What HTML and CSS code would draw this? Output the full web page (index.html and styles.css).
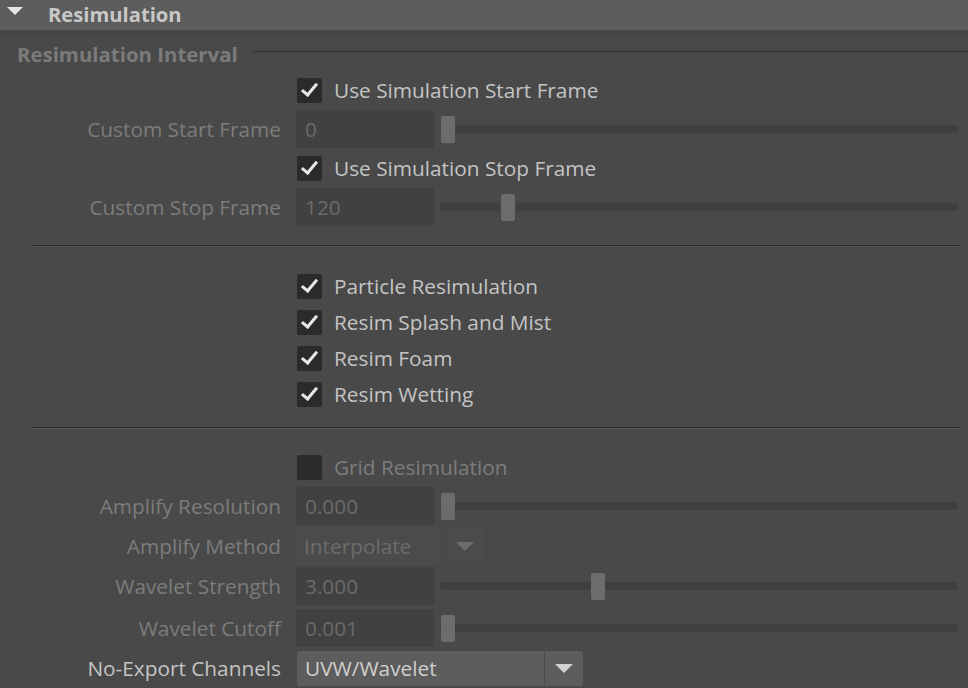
FILE: index.html
```html
<!DOCTYPE html>
<html lang="en">
<head>
    <meta charset="UTF-8">
    <title>Resimulation</title>
    <link rel="stylesheet" href="styles.css">
</head>
<body>
<div class="frame">
    <div class="frame-head">
        <span class="arrow"></span>
        <span class="frame-title">Resimulation</span>
    </div>
    <div class="frame-body">
        <div class="group-title">
            <span>Resimulation Interval</span>
            <span class="group-line"></span>
        </div>

        <div class="row row-check">
            <div class="label"></div>
            <div class="ctrl"><span class="cb on"></span><span class="cb-text">Use Simulation Start Frame</span></div>
        </div>
        <div class="row">
            <div class="label dim">Custom Start Frame</div>
            <div class="ctrl">
                <div class="field">0</div>
                <div class="slider"><div class="track"></div><div class="handle" style="left:1px"></div></div>
            </div>
        </div>
        <div class="row row-check">
            <div class="label"></div>
            <div class="ctrl"><span class="cb on"></span><span class="cb-text">Use Simulation Stop Frame</span></div>
        </div>
        <div class="row">
            <div class="label dim">Custom Stop Frame</div>
            <div class="ctrl">
                <div class="field">120</div>
                <div class="slider"><div class="track"></div><div class="handle" style="left:61px"></div></div>
            </div>
        </div>

        <div class="sep sep-1"></div>

        <div class="checks">
            <div class="row row-small">
                <div class="label"></div>
                <div class="ctrl"><span class="cb on"></span><span class="cb-text">Particle Resimulation</span></div>
            </div>
            <div class="row row-small">
                <div class="label"></div>
                <div class="ctrl"><span class="cb on"></span><span class="cb-text">Resim Splash and Mist</span></div>
            </div>
            <div class="row row-small">
                <div class="label"></div>
                <div class="ctrl"><span class="cb on"></span><span class="cb-text">Resim Foam</span></div>
            </div>
            <div class="row row-small">
                <div class="label"></div>
                <div class="ctrl"><span class="cb on"></span><span class="cb-text">Resim Wetting</span></div>
            </div>
        </div>

        <div class="sep sep-2"></div>

        <div class="row row-check">
            <div class="label"></div>
            <div class="ctrl"><span class="cb"></span><span class="cb-text dim">Grid Resimulation</span></div>
        </div>
        <div class="row">
            <div class="label dim">Amplify Resolution</div>
            <div class="ctrl">
                <div class="field">0.000</div>
                <div class="slider"><div class="track"></div><div class="handle" style="left:1px"></div></div>
            </div>
        </div>
        <div class="row">
            <div class="label dim">Amplify Method</div>
            <div class="ctrl">
                <div class="combo combo-off">
                    <span class="combo-text">Interpolate</span>
                    <span class="combo-btn"><span class="tri"></span></span>
                </div>
            </div>
        </div>
        <div class="row row-gap">
            <div class="label dim">Wavelet Strength</div>
            <div class="ctrl">
                <div class="field">3.000</div>
                <div class="slider"><div class="track"></div><div class="handle" style="left:151px"></div></div>
            </div>
        </div>
        <div class="row">
            <div class="label dim">Wavelet Cutoff</div>
            <div class="ctrl">
                <div class="field">0.001</div>
                <div class="slider"><div class="track"></div><div class="handle" style="left:1px"></div></div>
            </div>
        </div>
        <div class="row">
            <div class="label">No-Export Channels</div>
            <div class="ctrl">
                <div class="combo">
                    <span class="combo-text">UVW/Wavelet</span>
                    <span class="combo-btn"><span class="tri"></span></span>
                </div>
            </div>
        </div>
    </div>
</div>
</body>
</html>
```

FILE: styles.css
```css
html,body{
    margin:0;
    padding:0;
}
body{
    background:#494949;
    font-family:"Open Sans","Noto Sans",sans-serif;
    font-size:20.8px;
    color:#c4c4c4;
    width:968px;
    height:688px;
    overflow:hidden;
}
.frame-head{
    height:30px;
    background:#5d5d5d;
    display:flex;
    align-items:center;
}
.arrow{
    width:0;
    height:0;
    border-left:8px solid transparent;
    border-right:8px solid transparent;
    border-top:8px solid #e6e6e6;
    margin:0 25px 0 7px;
    position:relative;
    top:-4px;
}
.frame-title{
    font-weight:bold;
    color:#c8c8c8;
    font-size:20.2px;
    position:relative;
    top:-1px;
}
.frame-body{
    border-top:5px solid #454545;
}
.group-title{
    height:28px;
    margin-top:5px;
    margin-bottom:3px;
    display:flex;
    align-items:center;
    padding-left:17px;
    font-weight:bold;
    font-size:20.4px;
    color:#7b7b7b;
}
.group-line{
    flex:1;
    height:1px;
    background:#2e2e2e;
    margin-left:15px;
    position:relative;
    top:-3px;
}
.row{
    display:flex;
    align-items:center;
    height:40px;
}
.row-check{
    height:38px;
}
.row-small{
    height:36px;
}
.row-gap{
    margin-bottom:2px;
}
.label{
    width:281px;
    text-align:right;
    padding-right:15px;
    white-space:nowrap;
    flex:none;
}
.dim{
    color:#7c7c7c;
}
.ctrl{
    flex:1;
    display:flex;
    align-items:center;
    padding-right:10px;
}
.cb{
    width:25px;
    height:25px;
    background:#2b2b2b;
    border-radius:2px;
    margin-left:1px;
    position:relative;
    flex:none;
}
.cb.on:after{
    content:"";
    position:absolute;
    left:8px;
    top:2px;
    width:6px;
    height:13px;
    border-right:3.5px solid #e8e8e8;
    border-bottom:3.5px solid #e8e8e8;
    transform:rotate(40deg);
}
.cb-text{
    margin-left:12px;
    white-space:nowrap;
}
.field{
    width:129px;
    height:38px;
    line-height:38px;
    padding-left:9px;
    background:#414141;
    border-radius:3px;
    color:#6b6b6b;
    flex:none;
}
.slider{
    flex:1;
    position:relative;
    height:27px;
    margin-left:6px;
}
.track{
    position:absolute;
    left:0;
    right:0;
    top:9px;
    height:8px;
    border-radius:4px;
    background:#3f3f3f;
}
.handle{
    position:absolute;
    top:0;
    width:14px;
    height:27px;
    border-radius:2px;
    background:#6c6c6c;
}
.sep{
    margin-left:32px;
    margin-right:8px;
    height:1px;
    background:#2b2b2b;
    border-bottom:1px solid #555555;
}
.sep-1{
    margin-top:18px;
    margin-bottom:21px;
}
.sep-2{
    margin-top:15px;
    margin-bottom:19px;
}
.combo{
    display:flex;
    height:35px;
    width:286px;
    background:#5d5d5d;
    border-radius:2px;
    margin-left:1px;
}
.combo-text{
    flex:1;
    line-height:35px;
    padding-left:8px;
    color:#cfcfcf;
    border-right:1px solid #4d4d4d;
}
.combo-btn{
    width:38px;
    display:flex;
    align-items:center;
    justify-content:center;
}
.tri{
    width:0;
    height:0;
    border-left:9px solid transparent;
    border-right:9px solid transparent;
    border-top:9px solid #d4d4d4;
}
.combo-off{
    width:189px;
    height:38px;
    background:#4b4b4b;
    margin-left:0;
}
.combo-off .combo-text{
    line-height:38px;
    color:#6b6b6b;
    border-right:1px solid #474747;
}
.combo-off .combo-btn{
    width:40px;
}
.combo-off .tri{
    border-top-color:#6c6c6c;
}
```
